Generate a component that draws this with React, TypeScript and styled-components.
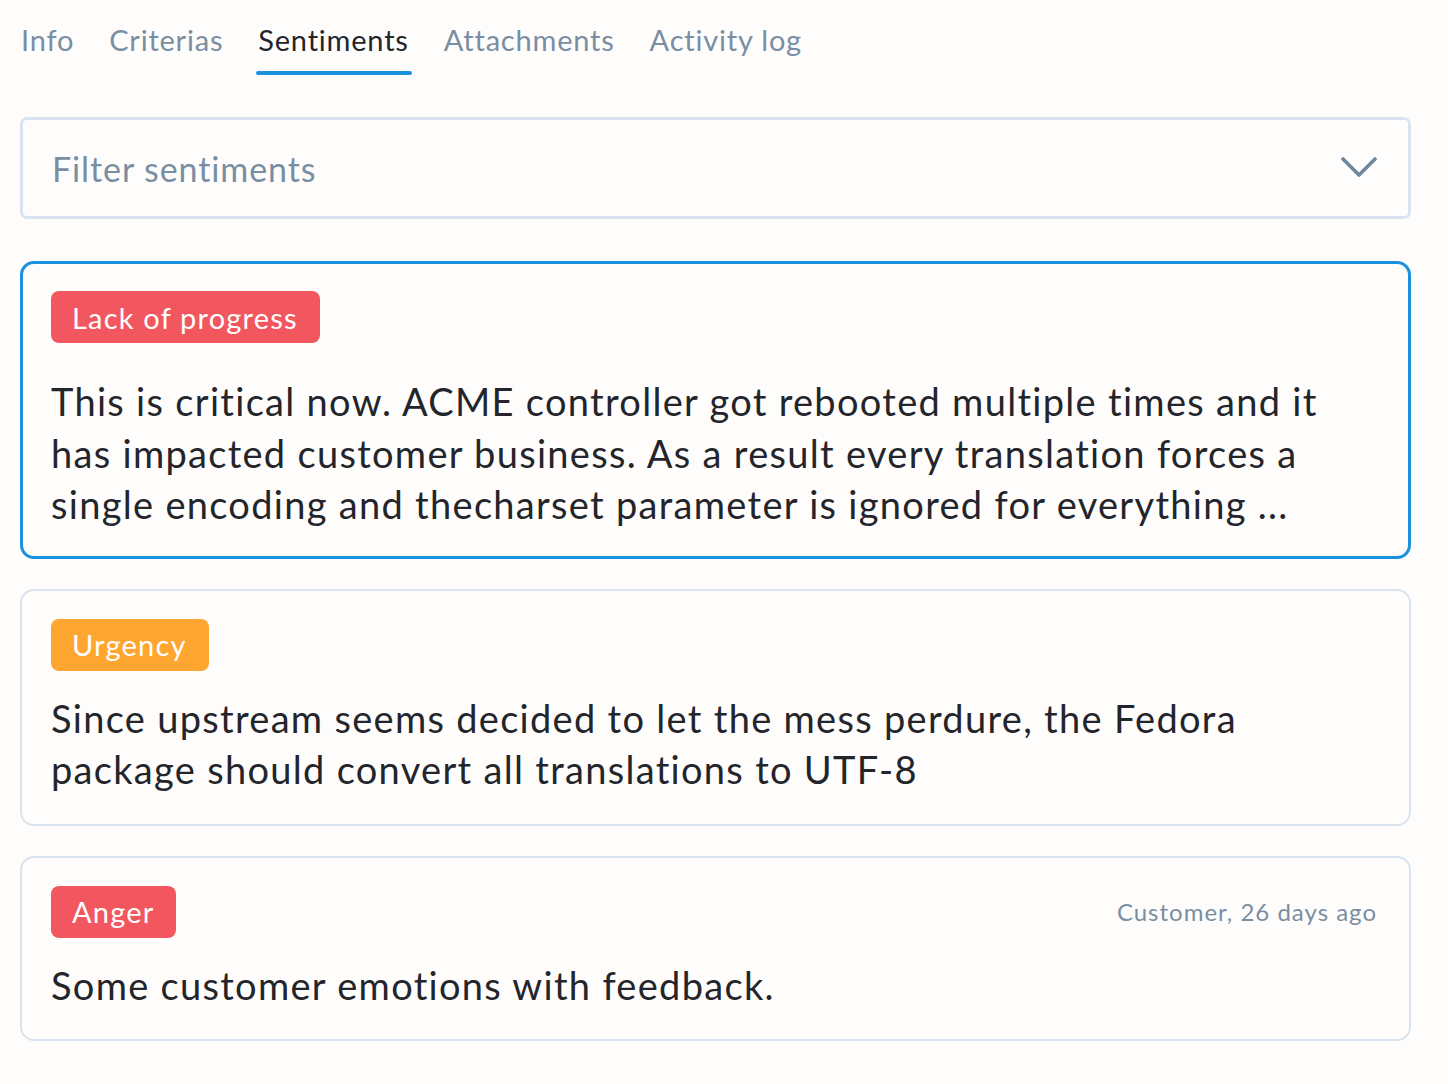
import styled, { createGlobalStyle } from "styled-components";

const GlobalStyle = createGlobalStyle`
  body {
    margin: 0;
    background: #fefdfc;
    font-family: Lato, "Open Sans", sans-serif;
    color: #23252b;
  }
`;

const Page = styled.div`
  padding: 0 37px 0 20px;
`;

const Tabs = styled.nav`
  display: flex;
  gap: 33px;
  height: 76px;
  align-items: flex-start;
  padding-top: 20px;
  box-sizing: border-box;
`;

const Tab = styled.div<{ active?: boolean }>`
  position: relative;
  font-size: 29px;
  line-height: 40px;
  letter-spacing: 0.8px;
  color: ${({ active }) => (active ? "#23252b" : "#7a8ea3")};
  padding: 0 1px;

  &::after {
    content: "";
    display: ${({ active }) => (active ? "block" : "none")};
    position: absolute;
    left: -1px;
    right: -2px;
    top: 51px;
    height: 4px;
    border-radius: 3px;
    background: #1a90de;
  }
`;

const Filter = styled.div`
  margin-top: 41px;
  height: 102px;
  box-sizing: border-box;
  border: 3px solid #d9e4f0;
  border-radius: 7px;
  display: flex;
  align-items: center;
  justify-content: space-between;
  padding: 0 31px 0 29px;
  font-size: 34px;
  letter-spacing: 0.9px;
  color: #7a8ea3;
`;

const List = styled.div`
  margin-top: 42px;
  display: flex;
  flex-direction: column;
  gap: 30px;
`;

const Card = styled.div<{ selected?: boolean }>`
  border: ${({ selected }) =>
    selected ? "3px solid #1a90de" : "2px solid #d9e4f0"};
  border-radius: 14px;
  padding: ${({ selected }) =>
    selected ? "27px 30px 25px 28px" : "28px 30px 28px 29px"};
`;

const CardHead = styled.div<{ spacing: number }>`
  display: flex;
  justify-content: space-between;
  align-items: center;
  margin-bottom: ${({ spacing }) => spacing}px;
`;

const Tag = styled.span<{ tone: string }>`
  display: inline-flex;
  align-items: center;
  height: 52px;
  padding: 0 22px 0 21px;
  border-radius: 8px;
  background: ${({ tone }) => tone};
  color: #fff;
  font-size: 29px;
  letter-spacing: 1.2px;
`;

const Meta = styled.span`
  font-size: 24px;
  letter-spacing: 1px;
  color: #7a8ea3;
  padding-right: 2px;
`;

const Body = styled.p`
  margin: 0;
  font-size: 38px;
  line-height: 51.5px;
  letter-spacing: 1.3px;
  color: #23252b;
  max-width: 1285px;
`;

const items = [
  {
    tag: "Lack of progress",
    tone: "#f2565f",
    selected: true,
    spacing: 33,
    text: "This is critical now. ACME controller got rebooted multiple times and it has impacted customer business. As a result every translation forces a single encoding and thecharset parameter is ignored for everything ...",
  },
  {
    tag: "Urgency",
    tone: "#ffa630",
    spacing: 22,
    text: "Since upstream seems decided to let the mess perdure, the Fedora package should convert all translations to UTF-8",
  },
  {
    tag: "Anger",
    tone: "#f2565f",
    spacing: 22,
    meta: "Customer, 26 days ago",
    text: "Some customer emotions with feedback.",
  },
];

function Chevron() {
  return (
    <svg width="36" height="24" viewBox="0 0 36 24" fill="none">
      <path
        d="M2 3 L18 19 L34 3"
        stroke="#6f87a0"
        strokeWidth="3.6"
        strokeLinecap="round"
        strokeLinejoin="round"
      />
    </svg>
  );
}

export default function App() {
  return (
    <Page>
      <GlobalStyle />
      <Tabs>
        <Tab>Info</Tab>
        <Tab>Criterias</Tab>
        <Tab active>Sentiments</Tab>
        <Tab>Attachments</Tab>
        <Tab>Activity log</Tab>
      </Tabs>

      <Filter>
        <span>Filter sentiments</span>
        <Chevron />
      </Filter>

      <List>
        {items.map((item) => (
          <Card key={item.tag} selected={item.selected}>
            <CardHead spacing={item.spacing}>
              <Tag tone={item.tone}>{item.tag}</Tag>
              {item.meta && <Meta>{item.meta}</Meta>}
            </CardHead>
            <Body>{item.text}</Body>
          </Card>
        ))}
      </List>
    </Page>
  );
}
